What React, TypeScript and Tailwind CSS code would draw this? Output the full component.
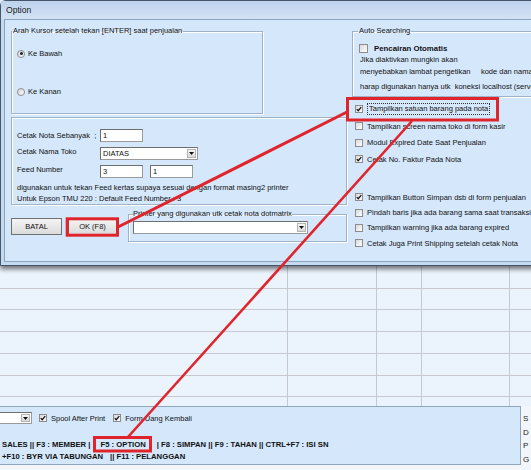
import React from "react";

function Check({ on = false, big = false }: { on?: boolean; big?: boolean }) {
  return (
    <span
      className={`flex shrink-0 items-center justify-center border border-[#8c8c8c] bg-gradient-to-br from-[#d9d9d9] to-white ${
        big ? "h-[9px] w-[9px]" : "h-[8px] w-[8px]"
      }`}
    >
      {on && (
        <svg viewBox="0 0 8 8" className="h-[6px] w-[6px]">
          <path d="M1 4.2 L3 6.3 L7 1.6" fill="none" stroke="#111" strokeWidth="1.7" />
        </svg>
      )}
    </span>
  );
}

function Radio({ on = false }: { on?: boolean }) {
  return (
    <span className="flex h-[8px] w-[8px] shrink-0 items-center justify-center rounded-full border border-[#8c8c8c] bg-gradient-to-br from-[#d6d6d6] to-white">
      {on && <span className="h-[3px] w-[3px] rounded-full bg-[#222]" />}
    </span>
  );
}

function Combo({ value, className }: { value: string; className: string }) {
  return (
    <div className={`flex items-stretch border border-[#9a9a9a] border-l-[#6e6e6e] border-t-[#6e6e6e] bg-white ${className}`}>
      <span className="flex-1 pl-[2px] leading-[11px]">{value}</span>
      <span className="m-[1px] flex w-[9px] items-center justify-center border border-[#b5b5b5] bg-gradient-to-b from-[#f6f6f6] to-[#dadada]">
        <svg viewBox="0 0 5 3" className="h-[3px] w-[5px]">
          <path d="M0 0H5L2.5 3Z" fill="#111" />
        </svg>
      </span>
    </div>
  );
}

const field =
  "h-[13px] border border-[#9a9a9a] border-l-[#6e6e6e] border-t-[#6e6e6e] bg-white pl-[2px] leading-[11px]";

const group = "border border-[#9fb3c8] shadow-[1px_1px_0_white,inset_1px_1px_0_white]";

function Dialog() {
  return (
    <div className="absolute left-0 top-0 flex h-[266px] w-[600px] flex-col rounded-tl-[6px] border border-[#46566a] bg-[#c5d9ef] shadow-[0_3px_5px_rgba(0,0,0,0.55)]">
      {/* title bar */}
      <div className="flex h-[18px] items-center bg-gradient-to-b from-[#bcd2ec] to-[#d3e3f5] pl-[5px] text-[8.6px] text-[#1b1b1b]">
        Option
      </div>

      {/* client */}
      <div className="mx-[3px] mb-[3px] flex flex-1 border border-[#8aa3bf] bg-[#d5e7fb]">
        {/* left column */}
        <div className="flex w-[342px] shrink-0 flex-col pl-[6px]">
          <fieldset className={`${group} mt-[7px] h-[87px] w-[252px]`}>
            <legend className="px-[1px] leading-[8px]">Arah Kursor setelah tekan [ENTER] saat penjualan</legend>
            <div className="flex flex-col gap-[29px] pl-[5px] pt-[14px]">
              <div className="flex h-[9px] items-center gap-[3px]">
                <Radio on />
                <span>Ke Bawah</span>
              </div>
              <div className="flex h-[9px] items-center gap-[3px]">
                <Radio />
                <span>Ke Kanan</span>
              </div>
            </div>
          </fieldset>

          <div className={`${group} mt-[3px] flex h-[88px] w-[336px] flex-col pl-[5px] pt-[11px]`}>
            <div className="grid grid-cols-[83px_1fr] items-center gap-y-[5px]">
              <span>Cetak Nota Sebanyak &nbsp;;</span>
              <div className={`${field} w-[43px]`}>1</div>
              <span className="self-start">Cetak Nama Toko</span>
              <Combo value="DIATAS" className="h-[13px] w-[98px]" />
              <span className="self-start">Feed Number</span>
              <div className="flex gap-[7px]">
                <div className={`${field} w-[43px]`}>3</div>
                <div className={`${field} w-[43px]`}>1</div>
              </div>
            </div>
            <div className="mt-[4px] leading-[11px]">
              <div>digunakan untuk tekan Feed kertas supaya sesuai dengan format masing2 printer</div>
              <div>Untuk Epson TMU 220 : Default Feed Number : 3</div>
            </div>
          </div>

          <div className="mt-[5px] flex items-start">
            <button className="mt-[8px] h-[17px] w-[51px] border border-[#707070] bg-gradient-to-b from-[#f4f4f4] to-[#dcdcdc] text-[#111]">
              BATAL
            </button>
            <button className="ml-[6px] mt-[8px] h-[17px] w-[49px] border border-[#707070] bg-gradient-to-b from-[#f4f4f4] to-[#dcdcdc] text-[#111]">
              OK (F8)
            </button>
            <fieldset className={`${group} ml-[11px] h-[32px] w-[219px]`}>
              <legend className="ml-[4px] leading-[8px]">Printer yang digunakan utk cetak nota dotmatrix</legend>
              <div className="pl-[4px] pt-[3px]">
                <Combo value="" className="h-[13px] w-[175px]" />
              </div>
            </fieldset>
          </div>
        </div>

        {/* right column */}
        <div className="flex flex-1 flex-col">
          <fieldset className={`${group} ml-[5px] mt-[7px] h-[70px]`}>
            <legend className="ml-[5px] px-[1px] leading-[8px]">Auto Searching</legend>
            <div className="flex flex-col pl-[6px] pt-[9px]">
              <div className="flex h-[9px] items-center gap-[6px]">
                <Check big />
                <span className="text-[7.8px] font-bold">Pencairan Otomatis</span>
              </div>
              <div className="mt-[1px] whitespace-pre pl-[1px] leading-[11px]">
                <div>Jika diaktivkan mungkin akan</div>
                <div className="mt-[1px]">menyebabkan lambat pengetikan     kode dan nama barang</div>
                <div className="mt-[4px]">harap digunakan hanya utk  koneksi localhost (server)</div>
              </div>
            </div>
          </fieldset>

          <div className="mt-[4px] flex flex-col whitespace-nowrap pl-[8px]">
            <div className="flex h-[16.7px] items-center gap-[4px]">
              <Check on />
              <span className="border border-dotted border-[#333] px-[1px] leading-[10px]">
                Tampilkan satuan barang pada nota
              </span>
            </div>
            <div className="flex h-[16.7px] items-center gap-[4px]">
              <Check />
              <span>Tampilkan screen nama toko di form kasir</span>
            </div>
            <div className="flex h-[16.7px] items-center gap-[4px]">
              <Check />
              <span>Modul Expired Date Saat Penjualan</span>
            </div>
            <div className="flex h-[16.7px] items-center gap-[4px]">
              <Check on />
              <span>Cetak No. Faktur Pada Nota</span>
            </div>
            <div className="mt-[22px] flex h-[15.3px] items-center gap-[4px]">
              <Check on />
              <span>Tampilkan Button Simpan dsb di form penjualan</span>
            </div>
            <div className="flex h-[15.3px] items-center gap-[4px]">
              <Check />
              <span>Pindah baris jika ada barang sama saat transaksi penjualan</span>
            </div>
            <div className="flex h-[15.3px] items-center gap-[4px]">
              <Check />
              <span>Tampilkan warning jika ada barang expired</span>
            </div>
            <div className="flex h-[15.3px] items-center gap-[4px]">
              <Check />
              <span>Cetak Juga Print Shipping setelah cetak Nota</span>
            </div>
          </div>
        </div>
      </div>
    </div>
  );
}

function GridRow({ h, line = true }: { h: string; line?: boolean }) {
  return (
    <div className={`grid grid-cols-[288px_89px_45px_88px_1fr] ${h} ${line ? "border-t border-[#c6cad0]" : ""}`}>
      <div className="border-r border-[#c6cad0]" />
      <div className="border-r border-[#c6cad0]" />
      <div className="border-r border-[#c6cad0]" />
      <div className="border-r border-[#c6cad0]" />
      <div />
    </div>
  );
}

export default function App() {
  return (
    <div className="relative h-[470px] w-[531px] overflow-hidden bg-[#f2f5f9] font-['Liberation_Sans',Arial,sans-serif] text-[7.5px] leading-[9px] text-[#111]">
      {/* background form: grid */}
      <div className="flex h-[406px] flex-col bg-[#ebf3fd]">
        <GridRow h="h-[287.8px]" line={false} />
        <GridRow h="h-[21.7px]" />
        <GridRow h="h-[21.7px]" />
        <GridRow h="h-[21.7px]" />
        <GridRow h="h-[21.7px]" />
        <GridRow h="h-[21.7px]" />
        <GridRow h="h-[9.7px]" />
      </div>

      {/* background form: bottom panel */}
      <div className="flex h-[59px]">
        <div className="flex w-[521px] flex-col border border-l-0 border-[#90a6bf] bg-[#d4e7fb] pt-[5px]">
          <div className="flex h-[12px] items-center">
            <Combo value="" className="h-[12px] w-[32px] border-l-0" />
            <span className="ml-[7px]">
              <Check on />
            </span>
            <span className="ml-[4px]">Spool After Print</span>
            <span className="ml-[8px]">
              <Check on />
            </span>
            <span className="ml-[4px]">Form Uang Kembali</span>
          </div>
          <div className="mt-[15px] whitespace-pre pl-[2px] text-[7.7px] font-bold leading-[11.7px]">
            <div>
              <span>SALES || F3 : MEMBER |</span>
              <span className="ml-[10px]">F5 : OPTION</span>
              <span className="ml-[11px]">| F8 : SIMPAN || F9 : TAHAN || CTRL+F7 : ISI SN</span>
            </div>
            <div>
              <span>+F10 : BYR VIA TABUNGAN</span>
              <span className="ml-[7px]">|| F11 : PELANGGAN</span>
            </div>
          </div>
        </div>
        <div className="ml-[2px] flex flex-col pt-[6px] text-[8px] leading-[13.5px] text-[#222]">
          <span>S</span>
          <span>D</span>
          <span>P</span>
          <span>G</span>
        </div>
      </div>

      <Dialog />

      {/* red annotations */}
      <svg className="pointer-events-none absolute left-0 top-0" width="531" height="470" viewBox="0 0 531 470">
        <g fill="none" stroke="#e0242b">
          <rect x="67.2" y="218.8" width="50.3" height="16.4" strokeWidth="3" />
          <rect x="347.5" y="98.5" width="150" height="21.5" strokeWidth="3" />
          <rect x="94.5" y="437.5" width="56" height="13.5" strokeWidth="3" />
          <line x1="118" y1="227" x2="347" y2="112" strokeWidth="3" />
          <line x1="412" y1="121" x2="128" y2="437" strokeWidth="2.6" />
        </g>
      </svg>
    </div>
  );
}
